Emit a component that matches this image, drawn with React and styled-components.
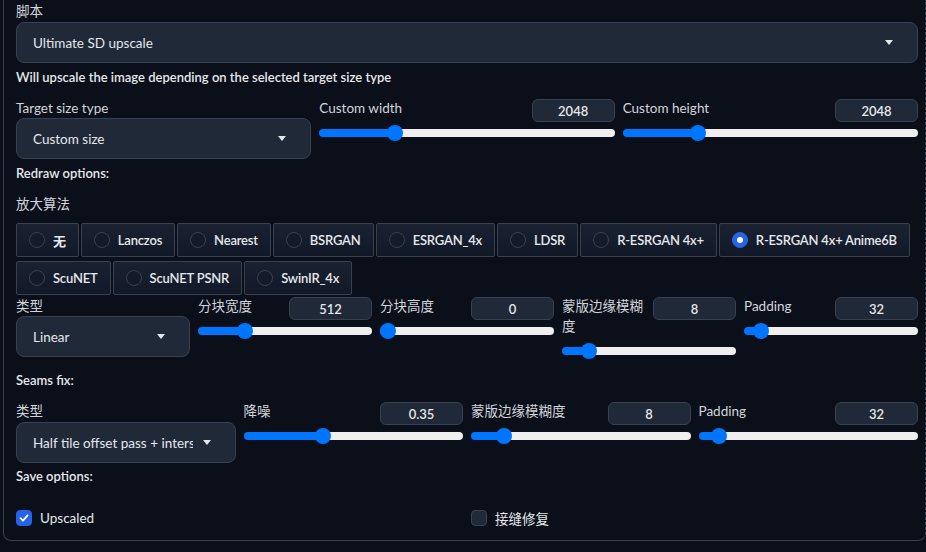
import styled, { createGlobalStyle } from 'styled-components';

const GlobalStyle = createGlobalStyle`
  html, body {
    margin: 0;
    padding: 0;
    background: #0b0f19;
  }
  body {
    font-family: Lato, "Noto Sans CJK SC", sans-serif;
    font-size: 13.5px;
    color: #e5e7eb;
  }
`;

const Panel = styled.div`
  margin-left: 3px;
  width: 923px;
  box-sizing: border-box;
  border-left: 1px solid #374151;
  border-bottom: 1px solid #374151;
  border-right: 1px dashed #374151;
  border-radius: 0 0 8px 8px;
  padding: 1px 7px 12px 12px;
  display: flex;
  flex-direction: column;
`;

const Label = styled.div`
  font-size: ${(p) => (p.$bold ? 13 : 13.5)}px;
  line-height: 20px;
  color: ${(p) => (p.$bright ? '#e5e7eb' : '#d1d5db')};
  font-weight: ${(p) => (p.$bold ? 600 : 400)};
  margin-top: ${(p) => p.$mt || 0}px;
  margin-bottom: ${(p) => p.$mb || 0}px;
`;

const Select = styled.div`
  height: 41px;
  box-sizing: border-box;
  border: 1px solid #374151;
  border-radius: 8px;
  background: #1f2937;
  display: flex;
  align-items: center;
  gap: 10px;
  padding: 0 24px 0 16px;
`;

const SelectText = styled.span`
  flex: 1;
  min-width: 0;
  overflow: hidden;
  white-space: nowrap;
  color: #e5e7eb;
`;

const Caret = styled.span`
  flex-shrink: 0;
  width: 0;
  height: 0;
  border-left: 4px solid transparent;
  border-right: 4px solid transparent;
  border-top: 5px solid #e5e7eb;
`;

const Row = styled.div`
  display: grid;
  grid-template-columns: repeat(${(p) => p.$cols}, 1fr);
  column-gap: 8px;
  align-items: start;
  margin-top: ${(p) => p.$mt || 0}px;
`;

const Field = styled.div`
  display: flex;
  flex-direction: column;
  min-width: 0;
`;

const FieldHead = styled.div`
  display: flex;
  align-items: flex-start;
  justify-content: space-between;
  gap: 4px;
`;

const HeadLabel = styled.div`
  flex: 1;
  min-width: 0;
  line-height: 20px;
  padding-bottom: 4px;
  color: #d1d5db;
`;

const NumBox = styled.div`
  flex-shrink: 0;
  width: 83px;
  height: 23px;
  margin-top: 1px;
  box-sizing: border-box;
  border: 1px solid #374151;
  border-radius: 6px;
  background: #1f2937;
  display: flex;
  align-items: center;
  justify-content: center;
  font-weight: 600;
  font-size: 13px;
  color: #e5e7eb;
`;

const Range = styled.input.attrs({ type: 'range', min: 0, max: 1000, readOnly: true })`
  -webkit-appearance: none;
  appearance: none;
  display: block;
  width: 100%;
  height: 16px;
  margin: 3px 0 0;
  background: transparent;

  &::-webkit-slider-runnable-track {
    height: 8px;
    border-radius: 4px;
    background: linear-gradient(
      to right,
      #0075ff calc(8px + ${(p) => p.$pct} * (100% - 16px)),
      #efefef 0
    );
  }
  &::-webkit-slider-thumb {
    -webkit-appearance: none;
    width: 16px;
    height: 16px;
    margin-top: -4px;
    border: none;
    border-radius: 50%;
    background: #0075ff;
  }
`;

const RadioWrap = styled.div`
  display: flex;
  flex-wrap: wrap;
  gap: 4px 2px;
  margin-top: 9px;
`;

const RadioItem = styled.label`
  display: flex;
  align-items: center;
  gap: 8px;
  height: 34px;
  box-sizing: border-box;
  padding: 0 12px;
  border: 1px solid #374151;
  border-radius: 2px;
  background: linear-gradient(to top, #111827, #1a2231);
  font-size: 13px;
  font-weight: 600;
  letter-spacing: -0.2px;
  color: #e5e7eb;
  white-space: nowrap;
`;

const RadioDot = styled.span`
  width: 16px;
  height: 16px;
  box-sizing: border-box;
  border-radius: 50%;
  border: 1px solid ${(p) => (p.$on ? '#2563eb' : '#374151')};
  background: ${(p) => (p.$on ? '#2563eb' : '#141b28')};
  display: flex;
  align-items: center;
  justify-content: center;

  &::after {
    content: '';
    display: ${(p) => (p.$on ? 'block' : 'none')};
    width: 6px;
    height: 6px;
    border-radius: 50%;
    background: #fff;
  }
`;

const CheckItem = styled.label`
  display: flex;
  align-items: center;
  gap: 8px;
  height: 20px;
  color: #e5e7eb;
`;

const CheckBox = styled.span`
  width: 16px;
  height: 16px;
  box-sizing: border-box;
  border-radius: 4px;
  border: 1px solid ${(p) => (p.$on ? '#2563eb' : '#374151')};
  background: ${(p) => (p.$on ? '#2563eb' : '#1f2937')};
  display: flex;
  align-items: center;
  justify-content: center;
`;

const upscalers = [
  '无',
  'Lanczos',
  'Nearest',
  'BSRGAN',
  'ESRGAN_4x',
  'LDSR',
  'R-ESRGAN 4x+',
  'R-ESRGAN 4x+ Anime6B',
  'ScuNET',
  'ScuNET PSNR',
  'SwinIR_4x',
];

function Dropdown({ value }) {
  return (
    <Select>
      <SelectText>{value}</SelectText>
      <Caret />
    </Select>
  );
}

function SliderField({ label, value, pct }) {
  return (
    <Field>
      <FieldHead>
        <HeadLabel>{label}</HeadLabel>
        <NumBox>{value}</NumBox>
      </FieldHead>
      <Range $pct={pct} defaultValue={Math.round(pct * 1000)} />
    </Field>
  );
}

function Check({ on, label }) {
  return (
    <CheckItem>
      <CheckBox $on={on}>
        {on && (
          <svg width="10" height="10" viewBox="0 0 10 10">
            <path d="M1.5 5.2 L4 7.6 L8.6 2.4" fill="none" stroke="#fff" strokeWidth="1.8" strokeLinecap="round" strokeLinejoin="round" />
          </svg>
        )}
      </CheckBox>
      {label}
    </CheckItem>
  );
}

export default function App() {
  return (
    <>
      <GlobalStyle />
      <Panel>
        <Label $mb={1}>脚本</Label>
        <Dropdown value="Ultimate SD upscale" />
        <Label $bright $bold $mt={4}>Will upscale the image depending on the selected target size type</Label>

        <Row $cols={3} $mt={11}>
          <Field>
            <Label>Target size type</Label>
            <Dropdown value="Custom size" />
          </Field>
          <SliderField label="Custom width" value="2048" pct={0.242} />
          <SliderField label="Custom height" value="2048" pct={0.242} />
        </Row>

        <Label $bright $bold $mt={4}>Redraw options:</Label>
        <Label $mt={11}>放大算法</Label>
        <RadioWrap>
          {upscalers.map((name) => (
            <RadioItem key={name}>
              <RadioDot $on={name === 'R-ESRGAN 4x+ Anime6B'} />
              {name}
            </RadioItem>
          ))}
        </RadioWrap>

        <Row $cols={5} $mt={1}>
          <Field>
            <Label>类型</Label>
            <Dropdown value="Linear" />
          </Field>
          <SliderField label="分块宽度" value="512" pct={0.244} />
          <SliderField label="分块高度" value="0" pct={0} />
          <SliderField label="蒙版边缘模糊度" value="8" pct={0.12} />
          <SliderField label="Padding" value="32" pct={0.057} />
        </Row>

        <Label $bright $bold $mt={11}>Seams fix:</Label>

        <Row $cols={4} $mt={11}>
          <Field>
            <Label $mb={1}>类型</Label>
            <Dropdown value="Half tile offset pass + intersections" />
          </Field>
          <SliderField label="降噪" value="0.35" pct={0.35} />
          <SliderField label="蒙版边缘模糊度" value="8" pct={0.124} />
          <SliderField label="Padding" value="32" pct={0.06} />
        </Row>

        <Label $bright $bold $mt={3}>Save options:</Label>

        <Row $cols={2} $mt={22}>
          <Check on label="Upscaled" />
          <Check label="接缝修复" />
        </Row>
      </Panel>
    </>
  );
}
